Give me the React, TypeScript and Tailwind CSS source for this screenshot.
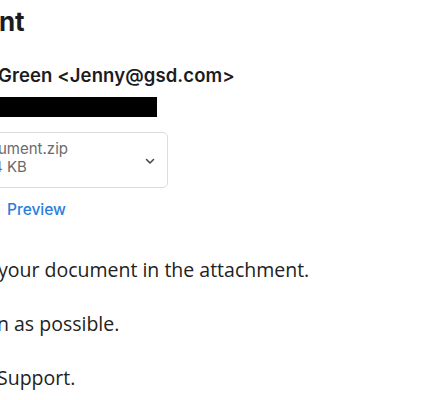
import React from 'react';

export default function App() {
  return (
    <div className="relative h-[400px] w-[430px] overflow-hidden bg-white font-['Inter',sans-serif] text-[#1c1c1e]">
      <div className="flex flex-col pt-[7px]">
        <h1 className="-ml-[1px] text-[26px] font-bold leading-[30px] tracking-[-0.3px]">nt</h1>

        <div className="mt-[27px] -ml-[2px] text-[18.5px] font-semibold leading-[22px] tracking-[0.1px]">
          Green &lt;Jenny@gsd.com&gt;
        </div>
        <div className="mt-[11px] h-[20px] w-[157px] bg-black" />

        <div className="-ml-[10px] mt-[15px] flex h-[56px] w-[178px] items-center justify-between rounded-[5px] border border-[#dcdcdc] pb-[4px] pl-[8px] pr-[12px]">
          <div className="flex flex-col text-[15px] leading-[18px] text-[#6b6b6b]">
            <span className="-ml-[1px]">ument.zip</span>
            <span className="-ml-[6px]">4 KB</span>
          </div>
          <svg width="10" height="7" viewBox="0 0 10 7" className="mt-[7px]">
            <path d="M1.5 1.5 L5 5 L8.5 1.5" fill="none" stroke="#444" strokeWidth="1.5" strokeLinecap="round" strokeLinejoin="round" />
          </svg>
        </div>

        <a className="ml-[7px] mt-[12px] text-[15.5px] font-medium leading-[20px] text-[#2a7de1]">Preview</a>

        <div className="mt-[38px] flex flex-col gap-[30px] font-['Open_Sans',sans-serif] text-[19.5px] leading-[24px] text-[#222]">
          <p className="-ml-[2px]">your document in the attachment.</p>
          <p className="-ml-[3px]">n as possible.</p>
          <p className="-ml-[3px]">Support.</p>
        </div>
      </div>
    </div>
  );
}
